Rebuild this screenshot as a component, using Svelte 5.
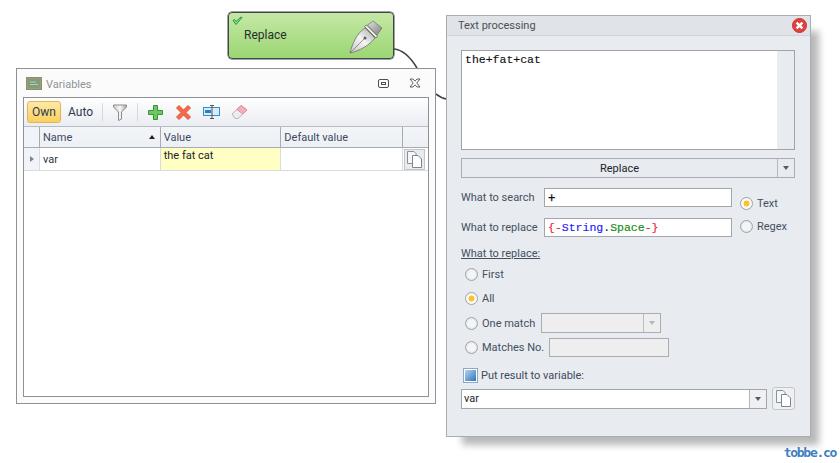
<script>
  let columns = ['Name', 'Value', 'Default value'];
</script>

<div class="canvas">
  <svg class="wires" width="840" height="463" viewBox="0 0 840 463">
    <path d="M394 49 C404 50 411 58 417 68" />
    <path d="M436 94 C440 97 443 99 447 99" />
  </svg>

  <div class="node">
    <svg class="check" width="11" height="10" viewBox="0 0 11 10">
      <path d="M1 4.5 L4 8.5 L10 1.5 L9 1 L4 5.5 L2.5 3.5 Z" fill="#8fe09a" stroke="#1f9a3a" stroke-width="1" stroke-linejoin="round" />
    </svg>
    <span class="node-label">Replace</span>
    <svg class="pen" width="34" height="34" viewBox="0 0 34 34">
      <defs>
        <linearGradient id="nib" x1="0" y1="1" x2="1" y2="0">
          <stop offset="0" stop-color="#c4c4c4" />
          <stop offset="0.5" stop-color="#f4f4f4" />
          <stop offset="1" stop-color="#a5a5a5" />
        </linearGradient>
        <linearGradient id="cap" x1="0" y1="0" x2="1" y2="1">
          <stop offset="0" stop-color="#e4e4e4" />
          <stop offset="1" stop-color="#7d7d7d" />
        </linearGradient>
      </defs>
      <path d="M1 33 C3 24 8 13 16 8 L26 18 C21 25 10 31 1 33 Z" fill="url(#nib)" stroke="#6f6f6f" stroke-width="0.8" />
      <path d="M1 33 L15 19" stroke="#6f6f6f" stroke-width="0.7" />
      <circle cx="16" cy="18" r="1.5" fill="#5f5f5f" />
      <path d="M15.5 6.5 L17.5 5 L28.5 16 L27 18 Z" fill="#eeeeee" stroke="#5f5f5f" stroke-width="0.8" />
      <path d="M18.5 5 L24 1 L33 8 L28 15 Z" fill="url(#cap)" stroke="#6f6f6f" stroke-width="0.7" />
    </svg>
  </div>

  <section class="vars">
    <header class="vars-title">
      <svg class="board" width="16" height="13" viewBox="0 0 16 13">
        <rect x="0.5" y="0.5" width="15" height="12" fill="#a89870" stroke="#8f8a70" />
        <rect x="2" y="2" width="12" height="9" fill="#7d9d7c" />
        <path d="M4 5 H10 M4 7.5 H12" stroke="#b4cbb2" stroke-width="1" />
      </svg>
      <span class="vars-name">Variables</span>
      <svg class="win-btn" width="11" height="9" viewBox="0 0 11 9">
        <rect x="0.5" y="0.5" width="10" height="8" rx="1.5" fill="none" stroke="#4a4f57" />
        <rect x="3.5" y="3.5" width="4" height="2" fill="none" stroke="#4a4f57" />
      </svg>
      <svg class="win-btn close" width="12" height="10" viewBox="0 0 12 10">
        <path d="M1 1 L4 1 L6 3.2 L8 1 L11 1 L7.8 5 L11 9 L8 9 L6 6.8 L4 9 L1 9 L4.2 5 Z" fill="#fff" stroke="#4a4f57" stroke-width="0.9" />
      </svg>
    </header>

    <div class="vars-body">
      <div class="toolbar">
        <span class="tool active">Own</span>
        <span class="tool auto">Auto</span>
        <i class="sep"></i>
        <svg class="funnel" width="14" height="17" viewBox="0 0 14 17">
          <defs>
            <linearGradient id="fun" x1="0" y1="0" x2="1" y2="0">
              <stop offset="0" stop-color="#c9c9c9" />
              <stop offset="0.5" stop-color="#f8f8f8" />
              <stop offset="1" stop-color="#a5a5a5" />
            </linearGradient>
          </defs>
          <path d="M0.5 1 H13.5 V3 L8.5 8 V15 L5.5 16.5 V8 L0.5 3 Z" fill="url(#fun)" stroke="#8c8c8c" />
        </svg>
        <i class="sep second"></i>
        <svg class="icon add" width="15" height="15" viewBox="0 0 15 15">
          <path d="M5.5 0.5 H9.5 V5.5 H14.5 V9.5 H9.5 V14.5 H5.5 V9.5 H0.5 V5.5 H5.5 Z" fill="#6cc95e" stroke="#35953a" />
        </svg>
        <svg class="icon del" width="15" height="15" viewBox="0 0 15 15">
          <path d="M0.5 3 L3 0.5 L7.5 5 L12 0.5 L14.5 3 L10 7.5 L14.5 12 L12 14.5 L7.5 10 L3 14.5 L0.5 12 L5 7.5 Z" fill="#f4694a" stroke="#e0563a" />
        </svg>
        <svg class="icon ren" width="17" height="14" viewBox="0 0 17 14">
          <rect x="0.5" y="2.5" width="16" height="8" fill="#d9ecfa" stroke="#2f8fd0" />
          <rect x="2" y="5" width="6" height="3" fill="#2f7fc0" />
          <path d="M9 0.5 V13.5 M7 0.5 H11 M7 13.5 H11" stroke="#555" fill="none" />
        </svg>
        <svg class="icon" width="17" height="16" viewBox="0 0 17 16">
          <path d="M1 10 L10 1.5 L16 6 L7 14.5 H4 Z" fill="#ececec" stroke="#b5b5b5" />
          <path d="M10 1.5 L16 6 L12 10 L6 5.5 Z" fill="#f4b0bc" stroke="#dd8c9c" />
        </svg>
      </div>

      <div class="grid-head">
        <div class="indicator"></div>
        {#each columns as col, i}
          <div class="cell head c{i}">
            {col}
            {#if i === 0}<i class="sort"></i>{/if}
          </div>
        {/each}
        <div class="cell head c3"></div>
      </div>
      <div class="grid-row">
        <div class="indicator row-ind"><i class="arrow"></i></div>
        <div class="cell c0">var</div>
        <div class="cell c1 value">the fat cat</div>
        <div class="cell c2"></div>
        <div class="cell c3 copy-cell">
          <span class="copy-btn">
            <svg width="15" height="17" viewBox="0 0 15 17">
              <path d="M0.5 0.5 H7 L9 2.5 V12.5 H0.5 Z" fill="#f4f6f8" stroke="#8a9098" />
              <path d="M5.5 4.5 H11 L14.5 8 V16.5 H5.5 Z" fill="#fff" stroke="#7e858d" />
            </svg>
          </span>
        </div>
      </div>
    </div>
  </section>

  <section class="proc">
    <header class="proc-title">
      <span>Text processing</span>
      <svg class="proc-close" width="15" height="15" viewBox="0 0 15 15">
        <circle cx="7.5" cy="7.5" r="7" fill="#e2403c" stroke="#c9352f" />
        <path d="M4.6 4.6 L10.4 10.4 M10.4 4.6 L4.6 10.4" stroke="#fff" stroke-width="2.4" />
      </svg>
    </header>

    <div class="proc-body">
      <div class="textarea">
        <div class="text-area-inner mono">the+fat+cat</div>
        <div class="scroll-gutter"></div>
      </div>

      <div class="combo-btn">
        <span class="combo-label">Replace</span>
        <span class="combo-arrow"><i class="tri"></i></span>
      </div>

      <div class="search-block">
        <div class="fields">
          <label class="field">
            <span class="field-name">What to search</span>
            <span class="input plus">+</span>
          </label>
          <label class="field">
            <span class="field-name">What to replace</span>
            <span class="input mono"><b class="red">{'{-'}</b><b class="blue">String</b><b class="dark">.</b><b class="green">Space</b><b class="red">{'-}'}</b></span>
          </label>
        </div>
        <div class="mode">
          <div class="radio-line"><i class="radio on"></i>Text</div>
          <div class="radio-line"><i class="radio"></i>Regex</div>
        </div>
      </div>

      <div class="underlined">What to replace:</div>

      <div class="options">
        <div class="radio-line"><i class="radio"></i>First</div>
        <div class="radio-line"><i class="radio on"></i>All</div>
        <div class="radio-line lower">
          <i class="radio"></i><span class="opt-name">One match</span>
          <span class="disabled-combo"><span class="dc-arrow"><i class="tri pale"></i></span></span>
        </div>
        <div class="radio-line">
          <i class="radio"></i><span class="opt-name wide">Matches No.</span>
          <span class="disabled-input"></span>
        </div>
      </div>

      <div class="put-result">
        <svg width="15" height="15" viewBox="0 0 15 15">
          <defs>
            <linearGradient id="chk" x1="0" y1="0" x2="1" y2="1">
              <stop offset="0" stop-color="#b5d6f2" />
              <stop offset="1" stop-color="#2f72b8" />
            </linearGradient>
          </defs>
          <rect x="0.5" y="0.5" width="14" height="14" fill="#fff" stroke="#8fa9c2" />
          <rect x="2" y="2" width="11" height="11" fill="url(#chk)" />
        </svg>
        <span>Put result to variable:</span>
      </div>

      <div class="result-row">
        <div class="var-combo">
          <span class="var-value">var</span>
          <span class="combo-arrow var-arrow"><i class="tri"></i></span>
        </div>
        <span class="copy-btn big">
          <svg width="15" height="17" viewBox="0 0 15 17">
            <path d="M0.5 0.5 H7 L9 2.5 V12.5 H0.5 Z" fill="#f4f6f8" stroke="#8a9098" />
            <path d="M5.5 4.5 H11 L14.5 8 V16.5 H5.5 Z" fill="#fff" stroke="#7e858d" />
          </svg>
        </span>
      </div>
    </div>
  </section>

  <div class="watermark">tobbe.co</div>
</div>

<style>
  :global(body) {
    margin: 0;
    background: #fff;
  }

  .canvas {
    position: relative;
    width: 840px;
    height: 463px;
    overflow: hidden;
    font-family: Roboto, "Open Sans", sans-serif;
    font-size: 11px;
    color: #3b4252;
  }

  .wires {
    position: absolute;
    left: 0;
    top: 0;
  }
  .wires path {
    fill: none;
    stroke: #3f4347;
    stroke-width: 1.6;
  }

  .node {
    position: absolute;
    left: 228px;
    top: 12px;
    width: 166px;
    height: 47px;
    box-sizing: border-box;
    border: 1px solid #41464a;
    border-radius: 4px;
    background: linear-gradient(#c5e8a5, #9bd673);
    display: flex;
    align-items: center;
    box-shadow: 0 0 0 0.5px #41464a;
  }
  .check {
    position: absolute;
    left: 3px;
    top: 3px;
  }
  .node-label {
    margin-left: 15px;
    margin-top: -1px;
    font-size: 12px;
    color: #26302a;
  }
  .pen {
    margin-left: auto;
    margin-right: 10px;
    margin-top: 3px;
  }

  .vars {
    position: absolute;
    left: 16px;
    top: 68px;
    width: 420px;
    height: 336px;
    box-sizing: border-box;
    border: 1px solid #8e9296;
    background: #fbfbfb;
    padding: 0 6px 6px;
    display: flex;
    flex-direction: column;
  }
  .vars-title {
    height: 28px;
    display: flex;
    align-items: center;
    padding-left: 3px;
    flex: none;
  }
  .vars-name {
    margin-left: 4px;
    margin-top: 2px;
    color: #8d9399;
  }
  .win-btn {
    margin-left: auto;
    margin-right: 20px;
  }
  .win-btn.close {
    margin-left: 0;
    margin-right: 8px;
  }
  .vars-body {
    flex: 1;
    border: 1px solid #8e9296;
    background: #fff;
  }
  .toolbar {
    height: 29px;
    box-sizing: border-box;
    background: linear-gradient(#ffffff, #e9ecf1);
    display: flex;
    align-items: center;
    padding-left: 3px;
    border-bottom: 1px solid #b8bdc4;
  }
  .tool {
    height: 22px;
    line-height: 20px;
    box-sizing: border-box;
    font-size: 12px;
    color: #2d3a50;
    border: 1px solid transparent;
  }
  .tool.active {
    width: 34px;
    text-align: center;
    background: linear-gradient(#fde9a6, #fbd05f);
    border-color: #e2b553;
    border-radius: 3px;
  }
  .tool.auto {
    width: 27px;
    margin-left: 6px;
    text-align: center;
  }
  .sep {
    width: 1px;
    height: 18px;
    background: #d6d9de;
    margin-left: 8px;
    flex: none;
  }
  .sep.second {
    margin-left: 10px;
  }
  .funnel {
    margin-left: 10px;
    flex: none;
  }
  .icon {
    margin-right: 11px;
    flex: none;
  }
  .add {
    margin-left: 10px;
    margin-right: 13px;
  }
  .del {
    margin-right: 12px;
  }

  .grid-head,
  .grid-row {
    display: flex;
  }
  .grid-head {
    height: 21px;
    box-sizing: border-box;
    background: linear-gradient(#f3f5f8, #ecf0f5);
    border-bottom: 1px solid #a7acb3;
  }
  .grid-row {
    height: 23px;
    box-sizing: border-box;
    border-bottom: 1px solid #d8dce0;
  }
  .indicator {
    width: 16px;
    flex: none;
    box-sizing: border-box;
    border-right: 1px solid #a7acb3;
    background: #f0f3f7;
  }
  .row-ind {
    border-right-color: #d8dce0;
    display: flex;
    align-items: center;
    justify-content: center;
  }
  .arrow {
    width: 0;
    height: 0;
    border-left: 4px solid #7d848c;
    border-top: 3.5px solid transparent;
    border-bottom: 3.5px solid transparent;
  }
  .cell {
    box-sizing: border-box;
    display: flex;
    align-items: center;
    padding-left: 3px;
    border-right: 1px solid #d8dce0;
    color: #30363f;
    white-space: nowrap;
  }
  .cell.head {
    border-right-color: #a7acb3;
    color: #3d4a5e;
  }
  .c0 { width: 121px; }
  .c1 { width: 121px; }
  .c2 { width: 122px; }
  .c3 { width: 25px; flex: none; border-right: none; }
  .sort {
    margin-left: auto;
    margin-right: 5px;
    width: 0;
    height: 0;
    border-left: 3.5px solid transparent;
    border-right: 3.5px solid transparent;
    border-bottom: 4px solid #222;
  }
  .value {
    background: #ffffc4;
    align-items: flex-start;
    padding-top: 1px;
    color: #1d2126;
  }
  .copy-cell {
    padding: 1px 0 0 1px;
    align-items: flex-start;
  }
  .copy-btn {
    width: 21px;
    height: 21px;
    box-sizing: border-box;
    border: 1px solid #c2c6cb;
    background: #e9ecef;
    display: flex;
    align-items: center;
    justify-content: center;
    flex: none;
  }
  .copy-btn.big {
    width: 23px;
    height: 23px;
    border-radius: 3px;
    margin-left: 5px;
    background: #eef0f3;
  }

  .proc {
    position: absolute;
    left: 446px;
    top: 15px;
    width: 365px;
    height: 422px;
    box-sizing: border-box;
    border: 1px solid #a9adb1;
    background: #e8ebf0;
    box-shadow: 12px 12px 7px -4px #b9b9b9;
    display: flex;
    flex-direction: column;
  }
  .proc-title {
    height: 20px;
    flex: none;
    box-sizing: border-box;
    background: #e0e3e7;
    border-bottom: 1px solid #cfd3d8;
    display: flex;
    align-items: center;
    justify-content: space-between;
    padding: 0 3px 0 11px;
    color: #4b5158;
  }
  .proc-body {
    flex: 1;
    padding: 14px 15px 0 14px;
    display: flex;
    flex-direction: column;
  }
  .textarea {
    height: 100px;
    box-sizing: border-box;
    border: 1px solid #a0a4a9;
    background: #fff;
    display: flex;
    flex: none;
  }
  .text-area-inner {
    flex: 1;
    padding: 2px 3px;
  }
  .scroll-gutter {
    width: 17px;
    background: #e8ebf0;
  }
  .mono {
    font-family: "Liberation Mono", "Courier New", monospace;
    font-size: 11.5px;
    color: #111;
    -webkit-text-stroke: 0.15px currentColor;
  }
  .combo-btn {
    margin-top: 8px;
    height: 20px;
    box-sizing: border-box;
    border: 1px solid #a9adb3;
    display: flex;
    align-items: center;
    flex: none;
  }
  .combo-label {
    flex: 1;
    text-align: center;
    color: #20242a;
  }
  .combo-arrow {
    width: 16px;
    height: 100%;
    border-left: 1px solid #b4b8bd;
    display: flex;
    align-items: center;
    justify-content: center;
    flex: none;
  }
  .tri {
    width: 0;
    height: 0;
    border-left: 3.5px solid transparent;
    border-right: 3.5px solid transparent;
    border-top: 4px solid #555b62;
  }
  .tri.pale {
    border-top-color: #b5b9be;
  }

  .search-block {
    display: flex;
    margin-top: 10px;
  }
  .fields {
    width: 271px;
    display: flex;
    flex-direction: column;
    gap: 11px;
  }
  .field {
    display: flex;
    align-items: center;
    justify-content: space-between;
    color: #45505e;
  }
  .field-name {
    white-space: nowrap;
  }
  .input {
    width: 188px;
    height: 19px;
    box-sizing: border-box;
    border: 1px solid #a3a6aa;
    background: #fff;
    padding: 0 3px;
    line-height: 17px;
    color: #111;
  }
  .plus {
    font-size: 13px;
  }
  .input.mono b {
    font-weight: 400;
  }
  .red { color: #f0203a; }
  .blue { color: #1a1aff; }
  .dark { color: #333; }
  .green { color: #128a12; }

  .mode {
    margin-left: 8px;
    padding-top: 8px;
    display: flex;
    flex-direction: column;
    gap: 9px;
  }
  .radio-line {
    display: flex;
    align-items: center;
    gap: 4px;
    height: 14px;
    color: #45505e;
    white-space: nowrap;
  }
  .radio {
    width: 13px;
    height: 13px;
    box-sizing: border-box;
    border-radius: 50%;
    border: 1px solid #a0a4a8;
    background: radial-gradient(circle, #f4f5f7 45%, #cfd2d6 100%);
    flex: none;
  }
  .radio.on {
    background: radial-gradient(circle, #fcc22e 36%, #fff 42%, #e9ebee 100%);
  }

  .underlined {
    margin-top: 9px;
    text-decoration: underline;
    color: #45505e;
    line-height: 15px;
  }
  .options {
    margin-top: 6px;
    padding-left: 4px;
    display: flex;
    flex-direction: column;
    gap: 10px;
  }
  .lower {
    margin-top: 1px;
  }
  .opt-name {
    width: 55px;
  }
  .opt-name.wide {
    width: 63px;
  }
  .disabled-combo {
    width: 120px;
    height: 20px;
    box-sizing: border-box;
    border: 1px solid #a9adb3;
    background: #eeeeee;
    display: flex;
    justify-content: flex-end;
  }
  .dc-arrow {
    width: 16px;
    border-left: 1px solid #b9bdc1;
    display: flex;
    align-items: center;
    justify-content: center;
  }
  .disabled-input {
    width: 120px;
    height: 19px;
    box-sizing: border-box;
    border: 1px solid #a9adb3;
    background: #eeeeee;
  }

  .put-result {
    margin-top: 14px;
    display: flex;
    align-items: center;
    gap: 3px;
    padding-left: 2px;
    color: #3f4a5a;
  }
  .result-row {
    margin-top: 4px;
    display: flex;
    align-items: center;
  }
  .var-combo {
    width: 306px;
    height: 20px;
    box-sizing: border-box;
    border: 1px solid #a3a6aa;
    background: #fff;
    display: flex;
    align-items: center;
  }
  .var-value {
    flex: 1;
    padding-left: 2px;
    color: #22262c;
  }
  .var-arrow {
    background: #eef0f3;
  }

  .watermark {
    position: absolute;
    right: 4px;
    bottom: 3px;
    font-family: "DejaVu Sans Mono", monospace;
    font-size: 13px;
    letter-spacing: -1.3px;
    font-weight: 700;
    color: #3f7fc2;
  }
</style>
